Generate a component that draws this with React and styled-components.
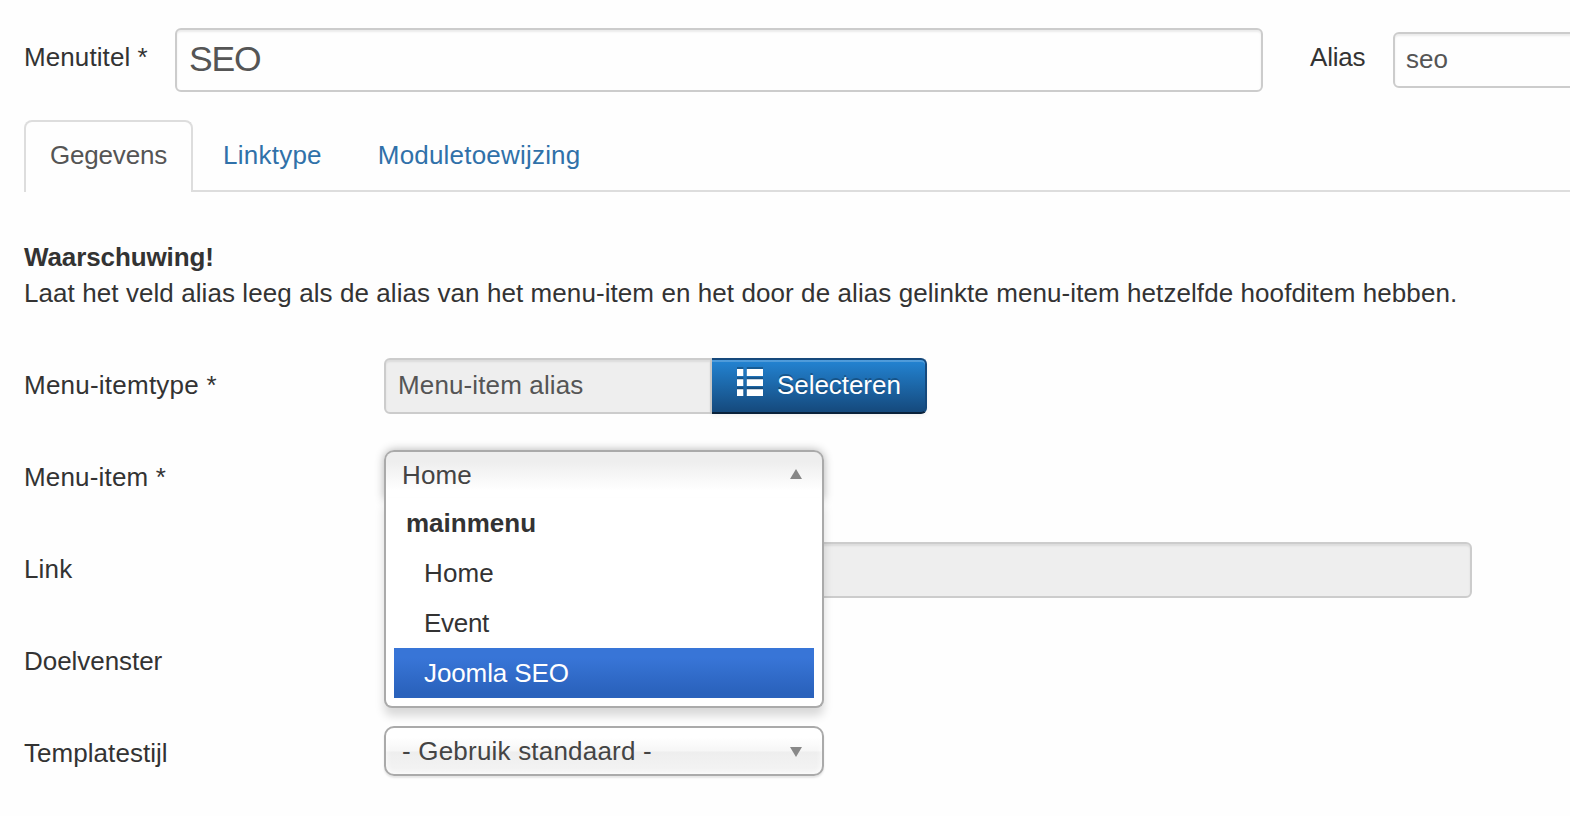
import React from 'react';
import styled, { createGlobalStyle, css } from 'styled-components';

const GlobalStyle = createGlobalStyle`
  *, *::before, *::after { box-sizing: border-box; }
  html, body { margin: 0; padding: 0; background: #fefefe; }
  body {
    overflow: hidden;
    font-family: 'Liberation Sans', Arial, sans-serif;
    font-size: 26px;
    line-height: 36px;
    color: #333;
  }
`;

const tracking = css`
  letter-spacing: ${(p) => p.$track || 0}px;
`;

const Page = styled.main`
  width: 1570px;
  height: 816px;
  padding-top: 28px;
  overflow: hidden;
`;

const TitleBar = styled.header`
  display: flex;
  height: 64px;
  padding-left: 24px;
  white-space: nowrap;
`;

const TitleLabel = styled.label`
  flex: none;
  width: ${(p) => p.$width}px;
  padding-top: 11px;
  ${tracking}
`;

const fieldFrame = css`
  border: 2px solid #ccc;
  border-radius: 6px;
  box-shadow: inset 0 2px 2px rgba(0, 0, 0, 0.075);
  color: #555;
  white-space: nowrap;
`;

const TitleField = styled.div`
  ${fieldFrame}
  flex: none;
  width: 1088px;
  height: 64px;
  margin-right: 47px;
  padding-left: 12px;
  background: #fefefe;
  font-size: 35.5px;
  line-height: 58px;
  ${tracking}
`;

const TextField = styled.div`
  ${fieldFrame}
  flex: none;
  width: ${(p) => p.$width}px;
  height: 56px;
  padding-left: 12px;
  background: ${(p) => (p.$readOnly ? '#eee' : '#fefefe')};
  line-height: 50px;
  ${(p) => p.$joined && 'border-radius: 6px 0 0 6px;'}
  ${tracking}
`;

const AliasField = styled(TextField)`
  margin-top: 4px;
  padding-left: 11px;
`;

const Tabs = styled.nav`
  display: flex;
  height: 72px;
  margin: 28px 0 0 24px;
  border-bottom: 2px solid #ddd;
`;

const Tab = styled.a`
  height: 72px;
  margin-right: 4px;
  padding: 15px 24px 0;
  border: 2px solid transparent;
  border-bottom: 0;
  border-radius: 8px 8px 0 0;
  color: #3071a9;
  ${tracking}
  ${(p) =>
    p.$active &&
    css`
      background: #fefefe;
      border-color: #ddd;
      color: #555;
    `}
`;

const Warning = styled.section`
  margin: 47px 0 47px 24px;
  white-space: nowrap;
`;

const WarningTitle = styled.strong`
  display: block;
  ${tracking}
`;

const WarningText = styled.p`
  margin: 0;
  ${tracking}
`;

const Form = styled.form`
  display: flex;
  flex-direction: column;
  gap: 36px;
  padding-left: 24px;
`;

const Row = styled.div`
  display: flex;
  height: 56px;
`;

const RowLabel = styled.label`
  flex: none;
  width: 360px;
  padding-top: 9px;
  ${tracking}
`;

const SelectButton = styled.button`
  display: flex;
  width: 215px;
  height: 56px;
  padding: 0 0 0 25px;
  border: 2px solid #15497c;
  border-left: 0;
  border-bottom-color: #0a223b;
  border-radius: 0 6px 6px 0;
  background: #15497c linear-gradient(#2384d3, #15497c);
  box-shadow: inset 0 2px 0 rgba(255, 255, 255, 0.2), 0 2px 4px rgba(0, 0, 0, 0.05);
  color: #fff;
  font: inherit;
  line-height: 50px;
  text-shadow: 0 -2px 0 rgba(0, 0, 0, 0.25);
  ${tracking}
`;

const ListIcon = styled.svg`
  flex: none;
  width: 26px;
  height: 27px;
  margin: 9px 14px 0 0;
  filter: drop-shadow(0 -2px 0 rgba(0, 0, 0, 0.25));
`;

const Chosen = styled.div`
  position: relative;
  width: 440px;
  height: 50px;
`;

const ChosenSingle = styled.div`
  display: flex;
  justify-content: space-between;
  height: 50px;
  padding: 0 20px 0 16px;
  border: 2px solid #aaa;
  border-radius: 10px;
  background: linear-gradient(#fff 20%, #f6f6f6 50%, #eee 52%, #f4f4f4 100%) padding-box;
  box-shadow: inset 0 0 6px #fff, 0 2px 2px rgba(0, 0, 0, 0.1);
  color: #444;
  line-height: 46px;
  white-space: nowrap;
  ${tracking}
  ${(p) =>
    p.$open &&
    css`
      border-bottom: 0;
      border-radius: 10px 10px 0 0;
      background: linear-gradient(#eee 20%, #fff 80%) padding-box;
      box-shadow: 0 0 10px rgba(0, 0, 0, 0.3);
    `}
`;

const Arrow = styled.svg`
  width: 12px;
  height: 10px;
  margin-top: ${(p) => p.$top}px;
  fill: #888;
`;

const ChosenDrop = styled.ul`
  position: absolute;
  z-index: 2;
  top: 48px;
  left: 0;
  width: 440px;
  margin: 0;
  padding: 0 8px 8px;
  border: 2px solid #aaa;
  border-top: 0;
  border-radius: 0 0 8px 8px;
  background: #fff;
  box-shadow: 0 8px 10px rgba(0, 0, 0, 0.15);
  list-style: none;
`;

const optionBox = css`
  height: 50px;
  line-height: 50px;
  ${tracking}
`;

const GroupName = styled.li`
  ${optionBox}
  padding-left: 12px;
  font-weight: bold;
`;

const Option = styled.li`
  ${optionBox}
  padding-left: 30px;
  ${(p) =>
    p.$highlighted &&
    css`
      background: linear-gradient(#3875d7 20%, #2a62bc 90%);
      color: #fff;
    `}
`;

export default function App() {
  return (
    <>
      <GlobalStyle />
      <Page>
        <TitleBar>
          <TitleLabel $width={151} $track={0.09}>Menutitel *</TitleLabel>
          <TitleField $track={-1.2}>SEO</TitleField>
          <TitleLabel $width={83} $track={-0.2}>Alias</TitleLabel>
          <AliasField $width={400}>seo</AliasField>
        </TitleBar>

        <Tabs>
          <Tab $active $track={-0.19}>Gegevens</Tab>
          <Tab $track={0.24}>Linktype</Tab>
          <Tab $track={0.2}>Moduletoewijzing</Tab>
        </Tabs>

        <Warning>
          <WarningTitle $track={-0.1}>Waarschuwing!</WarningTitle>
          <WarningText $track={0.078}>
            Laat het veld alias leeg als de alias van het menu-item en het door de alias gelinkte menu-item hetzelfde hoofditem hebben.
          </WarningText>
        </Warning>

        <Form>
          <Row>
            <RowLabel $track={0.23}>Menu-itemtype *</RowLabel>
            <TextField $readOnly $joined $width={328} $track={0.13}>Menu-item alias</TextField>
            <SelectButton type="button" $track={-0.05}>
              <ListIcon viewBox="0 0 26 27" fill="#fff">
                <path d="M0 0h6.3v7H0zM9.8 0H26v7H9.8zM0 10.2h6.3V17H0zM9.8 10.2H26V17H9.8zM0 20.2h6.3V27H0zM9.8 20.2H26V27H9.8z" />
              </ListIcon>
              Selecteren
            </SelectButton>
          </Row>
          <Row>
            <RowLabel $track={0.18}>Menu-item *</RowLabel>
            <Chosen>
              <ChosenSingle $open $track={0.12}>
                Home
                <Arrow viewBox="0 0 12 10" $top={17}>
                  <path d="M6 0l6 10H0z" />
                </Arrow>
              </ChosenSingle>
              <ChosenDrop>
                <GroupName>mainmenu</GroupName>
                <Option $track={0.12}>Home</Option>
                <Option $track={-0.3}>Event</Option>
                <Option $highlighted $track={-0.1}>Joomla SEO</Option>
              </ChosenDrop>
            </Chosen>
          </Row>
          <Row>
            <RowLabel $track={0.15}>Link</RowLabel>
            <TextField $readOnly $width={1088} />
          </Row>
          <Row>
            <RowLabel $track={-0.05}>Doelvenster</RowLabel>
          </Row>
          <Row>
            <RowLabel $track={0.05}>Templatestijl</RowLabel>
            <Chosen>
              <ChosenSingle $track={0.2}>
                - Gebruik standaard -
                <Arrow viewBox="0 0 12 10" $top={19}>
                  <path d="M0 0h12L6 10z" />
                </Arrow>
              </ChosenSingle>
            </Chosen>
          </Row>
        </Form>
      </Page>
    </>
  );
}
